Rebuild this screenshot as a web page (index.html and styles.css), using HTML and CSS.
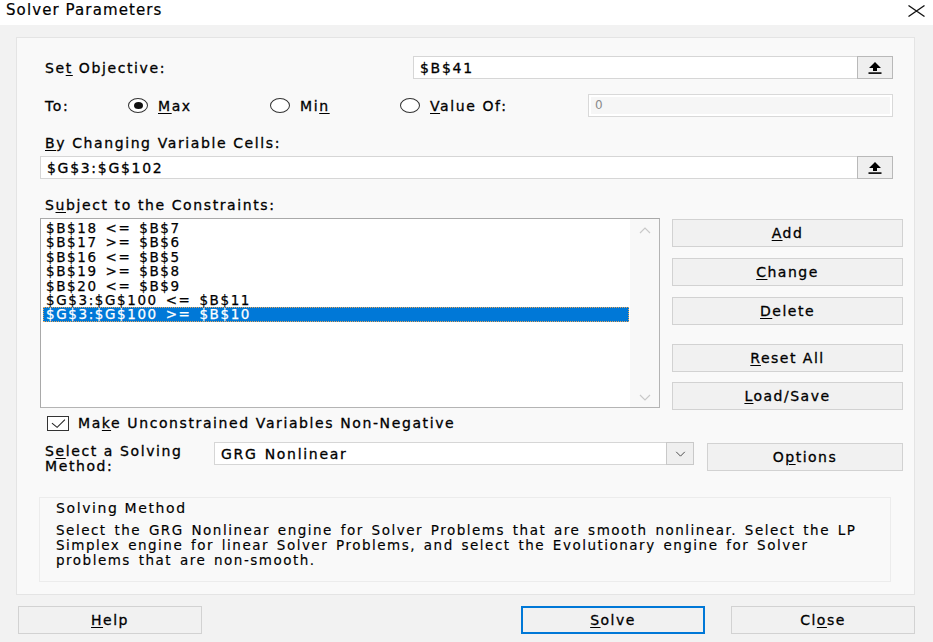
FILE: index.html
```html
<!DOCTYPE html>
<html>
<head>
<meta charset="utf-8">
<link rel="stylesheet" href="styles.css">
</head>
<body>
<div class="titlebar">
  <span class="title">Solver Parameters</span>
  <svg class="close" viewBox="0 0 17 12"><path d="M0.5 0.5 L16.5 11.5 M16.5 0.5 L0.5 11.5" stroke="#111" stroke-width="1.3" fill="none"/></svg>
</div>
<div class="panel">
  <div class="row r-obj">
    <span class="lbl w-obj">Se<u>t</u> Objective:</span>
    <div class="field f-obj">
      <span class="val">$B$41</span>
      <span class="refbtn"><svg viewBox="0 0 14 12"><path d="M7 0 L13 6 H9 V9 H5 V6 H1 Z" fill="#000"/><rect x="0.5" y="10.3" width="13" height="1.6" fill="#000"/></svg></span>
    </div>
  </div>
  <div class="row r-to">
    <span class="lbl w-to">To:</span>
    <span class="opt o-max"><span class="radio on"></span><span class="lbl"><u>M</u>ax</span></span>
    <span class="opt o-min"><span class="radio"></span><span class="lbl">Mi<u>n</u></span></span>
    <span class="opt o-val"><span class="radio"></span><span class="lbl"><u>V</u>alue Of:</span></span>
    <div class="field f-dis"><span class="dis-inner">0</span></div>
  </div>
  <div class="lbl block l-chg"><u>B</u>y Changing Variable Cells:</div>
  <div class="row r-chg">
    <div class="field f-chg">
      <span class="val">$G$3:$G$102</span>
      <span class="refbtn"><svg viewBox="0 0 14 12"><path d="M7 0 L13 6 H9 V9 H5 V6 H1 Z" fill="#000"/><rect x="0.5" y="10.3" width="13" height="1.6" fill="#000"/></svg></span>
    </div>
  </div>
  <div class="lbl block l-sub">S<u>u</u>bject to the Constraints:</div>
  <div class="row r-list">
    <div class="listbox">
      <ul class="items">
        <li>$B$18 &lt;= $B$7</li>
        <li>$B$17 &gt;= $B$6</li>
        <li>$B$16 &lt;= $B$5</li>
        <li>$B$19 &gt;= $B$8</li>
        <li>$B$20 &lt;= $B$9</li>
        <li>$G$3:$G$100 &lt;= $B$11</li>
        <li class="sel">$G$3:$G$100 &gt;= $B$10</li>
      </ul>
      <div class="scroll">
        <svg class="chev" viewBox="0 0 12 7"><path d="M1 6 L6 1 L11 6" stroke="#c9c9c9" stroke-width="1.2" fill="none"/></svg>
        <svg class="chev" viewBox="0 0 12 7"><path d="M1 1 L6 6 L11 1" stroke="#c9c9c9" stroke-width="1.2" fill="none"/></svg>
      </div>
    </div>
    <div class="btncol">
      <button class="btn b-add"><u>A</u>dd</button>
      <button class="btn b-chg"><u>C</u>hange</button>
      <button class="btn b-del"><u>D</u>elete</button>
      <button class="btn b-reset"><u>R</u>eset All</button>
      <button class="btn b-load"><u>L</u>oad/Save</button>
    </div>
  </div>
  <div class="row r-check">
    <span class="check"><svg viewBox="0 0 22 15"><path d="M4 7 L10 12 L19 3" stroke="#222" stroke-width="1.2" fill="none"/></svg></span>
    <span class="lbl">Ma<u>k</u>e Unconstrained Variables Non-Negative</span>
  </div>
  <div class="row r-method">
    <span class="lbl w-method">S<u>e</u>lect a Solving<br>Method:</span>
    <div class="field f-drop">
      <span class="val">GRG Nonlinear</span>
      <span class="dropbtn"><svg viewBox="0 0 12 7"><path d="M1 1 L6 6 L11 1" stroke="#444" stroke-width="1.1" fill="none"/></svg></span>
    </div>
    <button class="btn b-opt">O<u>p</u>tions</button>
  </div>
  <div class="group">
    <div class="g-title">Solving Method</div>
    <p class="g-desc">Select the GRG Nonlinear engine for Solver Problems that are smooth nonlinear. Select the LP Simplex engine for linear Solver Problems, and select the Evolutionary engine for Solver problems that are non-smooth.</p>
  </div>
</div>
<div class="footer">
  <button class="btn fbtn b-help"><u>H</u>elp</button>
  <button class="btn fbtn b-solve"><u>S</u>olve</button>
  <button class="btn fbtn b-close">Cl<u>o</u>se</button>
</div>
</body>
</html>
```

FILE: styles.css
```css
* { box-sizing: border-box; }
html, body { margin: 0; padding: 0; }
body {
  width: 933px;
  height: 642px;
  overflow: hidden;
  background: #f2f2f2;
  font-family: "DejaVu Sans", "Liberation Sans", sans-serif;
  font-size: 14px;
  color: #000;
}
u { text-decoration: underline; text-underline-offset: 2px; }

.titlebar {
  height: 25px;
  background: #fff;
  display: flex;
  align-items: center;
  justify-content: space-between;
  padding: 0 8px 6px 6px;
}
.title { font-size: 15px; letter-spacing: 1.1px; -webkit-text-stroke: 0.2px #000; }
.close { width: 17px; height: 12px; display: block; margin-top: 2px; }

.panel {
  margin: 12px 0 0 16px;
  width: 899px;
  height: 558px;
  background: #f9f9f9;
  border: 1px solid #e4e4e4;
  padding: 0 0 0 23px;
}
.row { display: flex; align-items: center; }
.lbl { letter-spacing: 1.6px; white-space: nowrap; -webkit-text-stroke: 0.3px #000; }
.block { display: block; height: 18px; line-height: 18px; padding-left: 5px; }

.field {
  height: 23px;
  background: #fff;
  border: 1px solid #d6d6d6;
  display: flex;
  align-items: center;
  position: relative;
}
.val {
  padding-left: 6px;
  flex: 1;
  letter-spacing: 1.7px;
  word-spacing: 1px;
  -webkit-text-stroke: 0.3px #000;
  white-space: nowrap;
}
.refbtn {
  width: 36px;
  height: 23px;
  margin: -1px -1px -1px 0;
  border: 1px solid #b9b9b9;
  background: #efefef;
  display: flex;
  align-items: center;
  justify-content: center;
}
.refbtn svg { width: 14px; height: 12px; display: block; }

.r-obj { margin-top: 18px; height: 23px; }
.w-obj { width: 373px; padding-left: 5px; }
.f-obj { width: 480px; }

.r-to { margin-top: 15px; height: 23px; }
.w-to { width: 88px; padding-left: 5px; }
.opt { display: flex; align-items: center; gap: 10px; }
.o-max { width: 142px; }
.o-min { width: 130px; }
.o-val { width: 188px; }
.radio {
  width: 20px;
  height: 15px;
  border: 1.3px solid #333;
  border-radius: 50%;
  background: #fff;
  display: flex;
  align-items: center;
  justify-content: center;
  flex: none;
}
.radio.on::after {
  content: "";
  width: 9px;
  height: 7px;
  border-radius: 50%;
  background: #111;
}
.f-dis { width: 305px; border-color: #d9d9d9; padding: 2px; }
.dis-inner {
  flex: 1;
  height: 17px;
  background: #f6f6f6;
  color: #8a8a8a;
  padding-left: 4px;
  line-height: 17px;
  font-size: 12px;
}

.l-chg { margin-top: 17px; }
.r-chg { margin-top: 4px; height: 23px; }
.f-chg { width: 853px; }

.l-sub { margin-top: 17px; }
.r-list { margin-top: 4px; align-items: flex-start; gap: 12px; }
.listbox {
  width: 620px;
  height: 190px;
  background: #fff;
  border: 1px solid #a9a9a9;
  border-right-color: #b4b4b4;
  border-bottom-color: #b4b4b4;
  display: flex;
}
.items {
  list-style: none;
  margin: 0;
  padding: 2px 1px 0 2px;
  flex: 1;
}
.items li {
  height: 14.4px;
  line-height: 14px;
  font-size: 13.5px;
  letter-spacing: 1.6px;
  word-spacing: 2px;
  padding-left: 3px;
  white-space: nowrap;
  -webkit-text-stroke: 0.25px #000;
}
.items li.sel {
  background: #0078d7;
  color: #fff;
  -webkit-text-stroke: 0.25px #fff;
  outline: 1px dotted #e8a65a;
  outline-offset: -1px;
}
.scroll {
  width: 29px;
  background: #f8f8f8;
  display: flex;
  flex-direction: column;
  justify-content: space-between;
  align-items: center;
  padding: 8px 0 6px;
}
.chev { width: 12px; height: 7px; display: block; }

.btncol { display: flex; flex-direction: column; width: 231px; padding-top: 1px; }
.btn {
  font-family: inherit;
  font-size: 14px;
  color: #000;
  letter-spacing: 1.5px;
  -webkit-text-stroke: 0.3px #000;
  height: 28px;
  background: #f1f1f1;
  border: 1px solid #d2d2d2;
  border-radius: 0;
  padding: 0;
  margin: 0;
}
.b-chg, .b-del { margin-top: 11px; }
.b-reset { margin-top: 19px; }
.b-load { margin-top: 10px; }

.r-check { margin-top: 3px; height: 20px; gap: 9px; padding-left: 7px; }
.check {
  width: 22px;
  height: 15px;
  border: 1.3px solid #333;
  background: #fff;
  display: block;
}
.check svg { width: 100%; height: 100%; display: block; }

.r-method { margin-top: 9px; align-items: flex-start; }
.w-method { width: 174px; padding-left: 5px; line-height: 15px; padding-top: 2px; }
.f-drop { width: 480px; }
.dropbtn {
  width: 28px;
  height: 23px;
  margin: -1px -1px -1px 0;
  border: 1px solid #c9c9c9;
  background: #efefef;
  display: flex;
  align-items: center;
  justify-content: center;
}
.dropbtn svg { width: 11px; height: 6px; display: block; }
.b-opt { width: 196px; margin: 1px 0 0 13px; }

.group {
  margin: 23px 0 0 -1px;
  width: 852px;
  height: 85px;
  border: 1px solid #ececec;
  background: #f9f9f9;
  padding: 2px 24px 0 16px;
}
.g-title {
  font-size: 14px;
  line-height: 16px;
  letter-spacing: 1.6px;
  -webkit-text-stroke: 0.15px #000;
}
.g-desc {
  margin: 7px 0 0 0;
  font-size: 13.5px;
  line-height: 15px;
  letter-spacing: 1.5px;
  word-spacing: 2px;
  -webkit-text-stroke: 0.15px #000;
}

.footer {
  margin-top: 11px;
  display: flex;
  padding-left: 18px;
}
.fbtn { width: 184px; height: 28px; }
.b-solve { margin-left: 319px; border: 2px solid #0078d7; }
.b-close { margin-left: 26px; }
```
